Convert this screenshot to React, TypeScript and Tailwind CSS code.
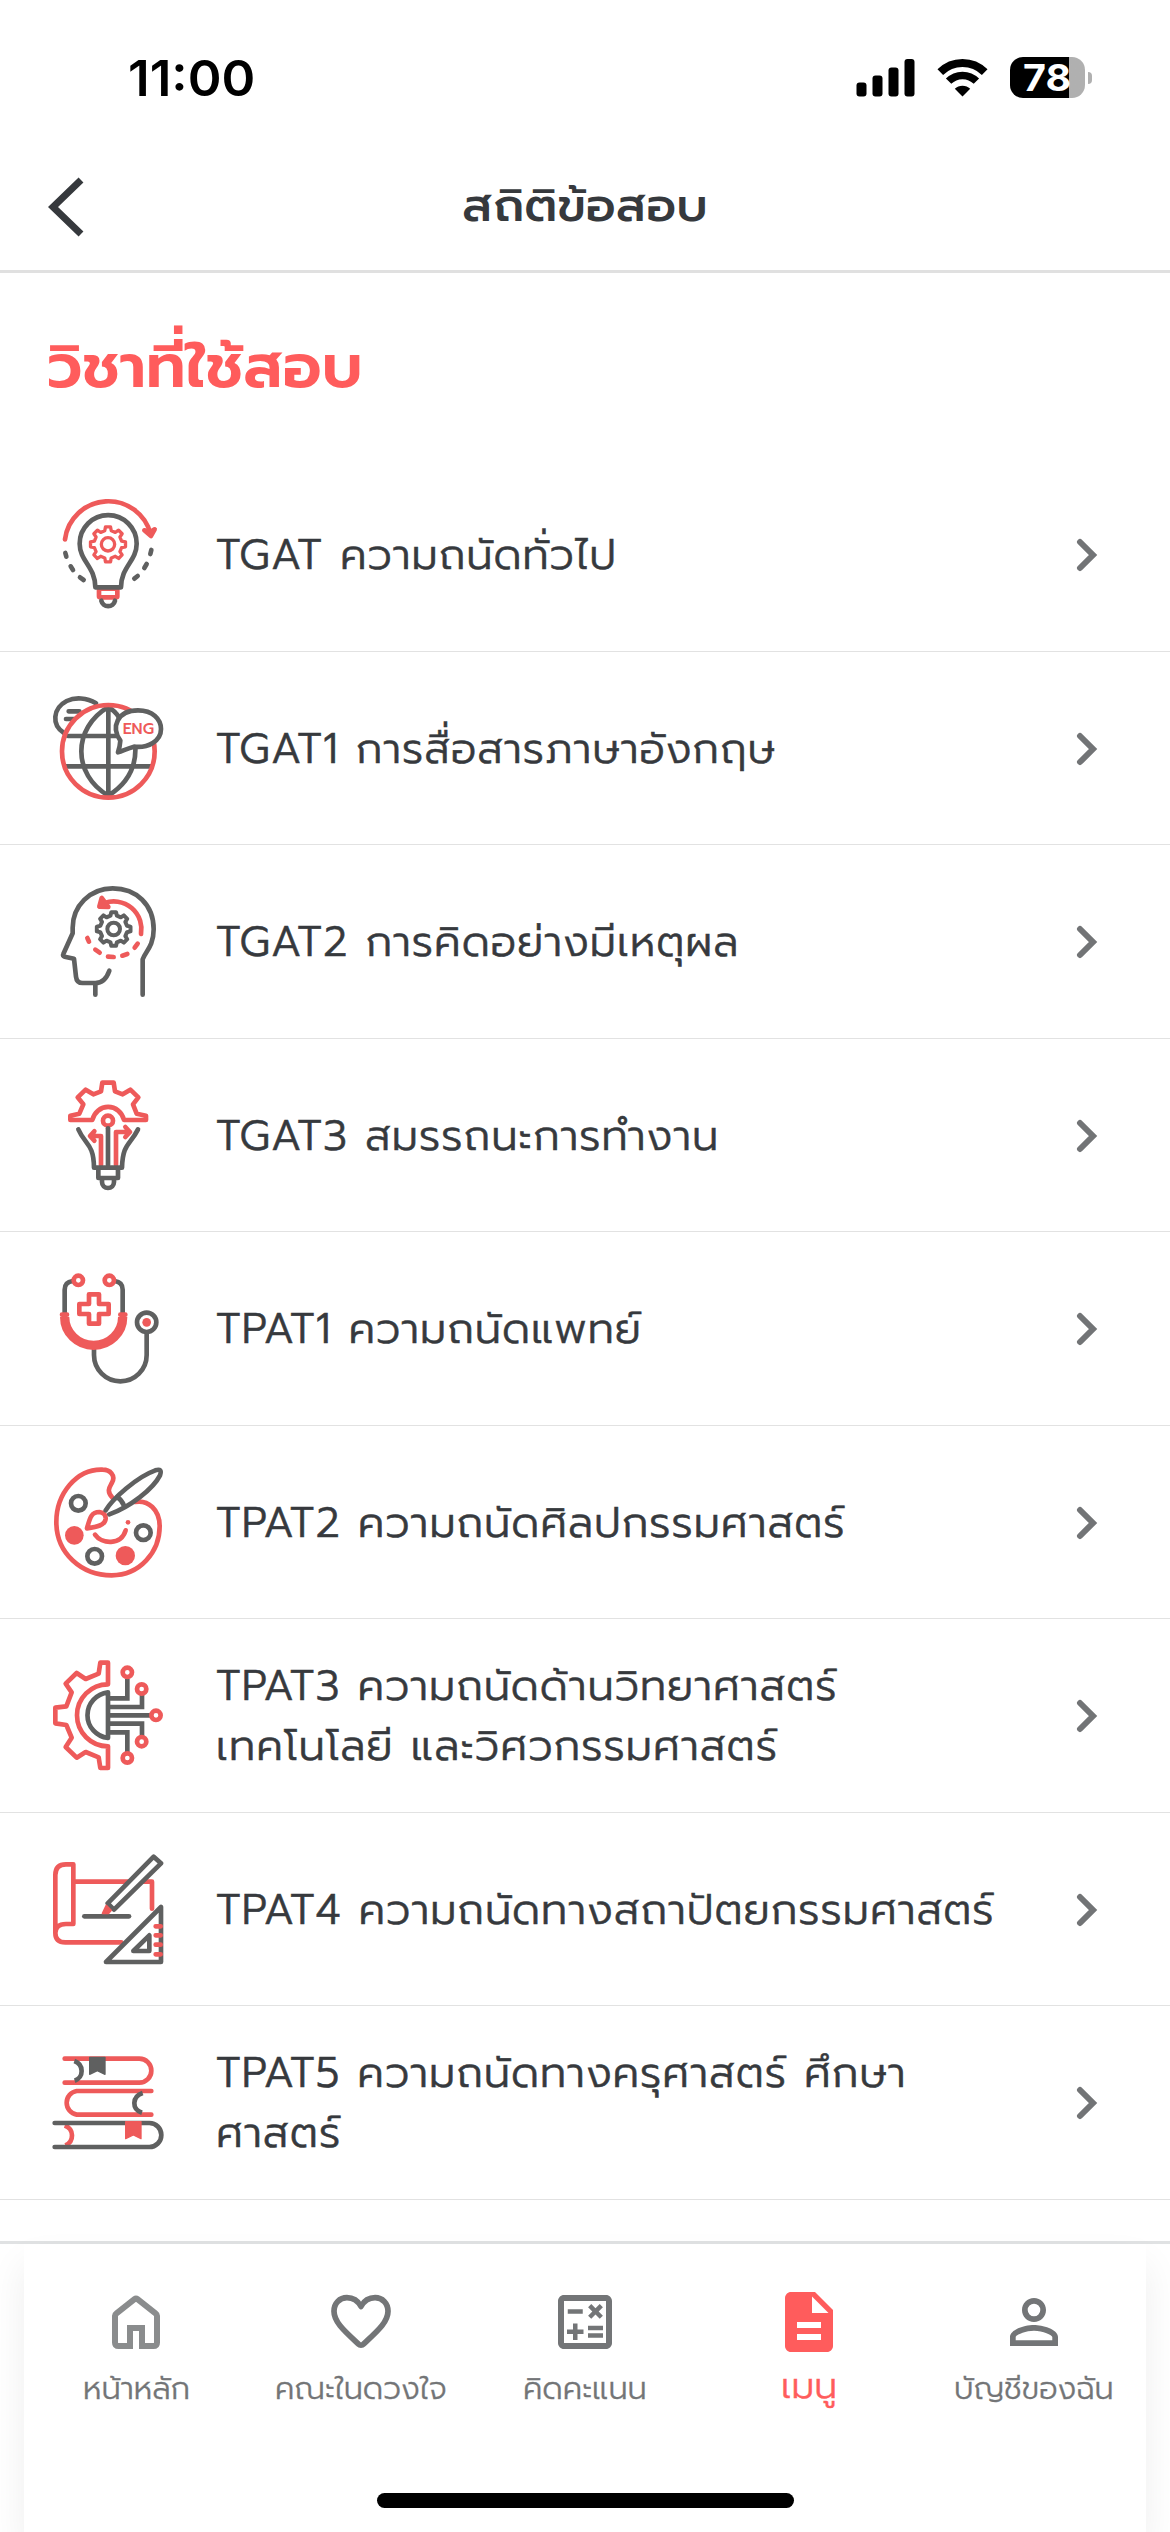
import React, { useLayoutEffect, useRef, useState } from "react";
import { MdOutlineCalculate, MdDescription, MdPersonOutline } from "react-icons/md";

const R = "#ee5a5a";
const D = "#5f6060";

/** Text stretched horizontally so that it fills exactly `w` pixels. */
function Fit({ w, children, className = "" }: { w: number; children: string; className?: string }) {
  const ref = useRef<HTMLSpanElement>(null);
  const [scale, setScale] = useState(1);
  useLayoutEffect(() => {
    if (ref.current) setScale(w / ref.current.offsetWidth);
  }, [w, children]);
  return (
    <span className={`block whitespace-nowrap ${className}`} style={{ width: w }}>
      <span ref={ref} className="inline-block origin-left" style={{ transform: `scaleX(${scale})` }}>
        {children}
      </span>
    </span>
  );
}

function gear(cx: number, cy: number, outer: number, inner: number, teeth = 8) {
  const pts: string[] = [];
  const step = (Math.PI * 2) / teeth;
  for (let i = 0; i < teeth; i++) {
    const a = -Math.PI / 2 + i * step;
    const add = (r: number, o: number) =>
      pts.push(`${(cx + r * Math.cos(a + o)).toFixed(1)},${(cy + r * Math.sin(a + o)).toFixed(1)}`);
    add(inner, -step * 0.3);
    add(outer, -step * 0.18);
    add(outer, step * 0.18);
    add(inner, step * 0.3);
  }
  return pts.join(" ");
}

function Icon({ y, children }: { y: number; children: React.ReactNode }) {
  return (
    <svg
      viewBox={`36 ${y} 336 336`}
      className="h-28 w-28 shrink-0"
      fill="none"
      strokeWidth="14"
      strokeLinecap="round"
      strokeLinejoin="round"
    >
      {children}
    </svg>
  );
}

const IdeaIcon = () => (
  <Icon y={56}>
    <g stroke={R}>
      <path d="M75 180A131 131 0 0 1 332 165" />
      <path d="M313 153L333 170L344 150L331 158Z" />
      <rect x="177" y="328" width="55" height="26" rx="3" />
      <polygon points={gear(204, 195, 53, 42)} strokeWidth="10" />
      <circle cx="204" cy="195" r="20" strokeWidth="10" />
    </g>
    <g stroke={D}>
      <path d="M166 324C166 262 119 245 119 193A85 85 0 0 1 290 193C290 245 243 262 243 324Z" />
      <path d="M184 364A21 21 0 0 0 225 364" />
      <path d="M76 221L79 232M92 261L99 272M120 294L131 302M334 212L331 224M320 254L313 266M293 290L283 298" />
    </g>
  </Icon>
);

const GlobeIcon = () => (
  <Icon y={637}>
    <g stroke={D}>
      <path d="M168 671C140 654 106 652 80 664C38 686 34 736 72 760" />
      <path d="M86 695H118M78 718H102" />
      <path d="M205 680V950M84 769H230M76 860H334M205 682C97 745 97 885 205 948C262 912 289 862 286 800M205 682C218 690 228 698 236 712" />
    </g>
    <circle cx="205" cy="815" r="139" stroke={R} />
    <path
      d="M241 783C212 742 232 692 294 692C338 692 363 718 363 748C363 784 324 806 282 801C262 806 248 814 234 818Q240 800 241 783Z"
      fill="#fff"
      stroke={D}
    />
    <text
      x="248"
      y="764"
      textLength="94"
      lengthAdjust="spacingAndGlyphs"
      fill={R}
      fontSize="45"
      className="font-['Prompt','Lato'] font-medium"
    >
      ENG
    </text>
  </Icon>
);

const HeadIcon = () => (
  <Icon y={47}>
    <g stroke={D}>
      <path d="M308 376V270C315 248 341 232 341 180C341 105 288 57 218 57C150 57 98 110 98 175V192L70 254Q67 260 74 262L102 268L108 322Q110 341 128 341H166Q195 341 208 304" />
      <path d="M166 343V376" />
      <polygon points={gear(221, 179, 51, 41)} strokeWidth="12" />
      <circle cx="221" cy="179" r="19" strokeWidth="12" />
    </g>
    <g stroke={R}>
      <path d="M303 194A83 83 0 0 0 194 101" />
      <path d="M185 86L178 112L205 113Z" fill={R} />
      <path d="M142 206L147 217M166 241L179 250M204 262L221 263M247 259L262 254M284 235L293 223" />
    </g>
  </Icon>
);

const SkillIcon = () => (
  <Icon y={627}>
    <g stroke={R}>
      <path d="M157 750H91V737L118 731L130 703L113 682L137 659L160 673L183 664L187 638H221L225 664L248 673L271 659L295 682L279 703L290 731L318 737V750H252A49 52 0 0 0 157 750Z" />
      <circle cx="204" cy="752" r="15" />
      <path d="M183 885V798H155M163 784L150 798L163 812M228 885V786H266M256 771L270 786L256 801" />
    </g>
    <g stroke={D}>
      <path d="M204 775V885" />
      <path d="M115 778C136 826 161 820 162 893H246C248 820 270 826 294 778" />
      <path d="M175 895V924H234V895M186 926V936A18 18 0 0 0 222 936V926" />
    </g>
  </Icon>
);

const MedicIcon = () => (
  <Icon y={67}>
    <g stroke={D}>
      <path d="M74 190V120Q74 97 98 94M248 190V120Q248 97 224 94" />
      <path d="M162 300V316A79 79 0 0 0 320 316V252" />
      <circle cx="320" cy="218" r="29" />
    </g>
    <g stroke={R}>
      <circle cx="115" cy="92" r="14" />
      <circle cx="208" cy="92" r="14" />
      <path d="M74 202A87 85 0 0 0 248 202" strokeWidth="28" strokeLinecap="butt" />
      <path d="M66 195H81M241 195H256" />
      <path d="M147 134H177V163H206V193H177V222H147V193H118V163H147Z" />
      <circle cx="320" cy="218" r="13" fill={R} stroke="none" />
    </g>
  </Icon>
);

const ArtIcon = () => (
  <Icon y={647}>
    <g stroke={R}>
      <path d="M218 743C198 722 209 710 216 697C228 675 210 658 188 658C110 655 49 730 49 815C49 910 125 975 215 975C300 975 359 905 359 828C359 778 325 748 285 755" />
      <path d="M165 853C185 882 243 886 257 840" />
      <path d="M141 834C150 800 155 785 178 785Q198 788 197 805C195 825 170 830 141 834Z" />
    </g>
    <g fill={R}>
      <circle cx="103" cy="855" r="28" />
      <circle cx="256" cy="916" r="29" />
      <circle cx="264" cy="816" r="7" />
    </g>
    <g stroke={D}>
      <circle cx="115" cy="759" r="22" />
      <circle cx="310" cy="847" r="22" />
      <circle cx="164" cy="918" r="22" />
      <path d="M197 780C218 745 290 680 346 660Q368 653 360 675C340 715 270 770 208 792" />
      <path d="M232 740Q246 750 252 766" />
    </g>
  </Icon>
);

const TechIcon = () => (
  <Icon y={59}>
    <g stroke={D}>
      <path d="M204 159A70 69 0 0 0 204 296Z" />
      <path
        d="M210 177H262V118M210 203H306V166M210 228H330M210 253H306V292M210 279H262V338"
        strokeLinejoin="miter"
        strokeLinecap="butt"
      />
    </g>
    <g stroke={R}>
      <path d="M204 70H181L176 103L137 119L110 101L77 133L95 159L79 201L46 205V252L79 257L95 295L77 323L110 355L137 338L176 354L181 386H204V321A93 93 0 0 1 204 135Z" />
      <circle cx="262" cy="99" r="14" />
      <circle cx="305" cy="149" r="14" />
      <circle cx="348" cy="228" r="14" />
      <circle cx="305" cy="307" r="14" />
      <circle cx="262" cy="356" r="14" />
    </g>
  </Icon>
);

const ArchitectIcon = () => (
  <Icon y={639}>
    <g stroke={R}>
      <path d="M100 673H78Q46 673 46 705V878Q46 907 76 907H244M100 673V852H78Q46 852 46 880M105 725H336V806" />
    </g>
    <path d="M133 829H267" stroke={D} />
    <path d="M341 650L363 670L222 809L203 790Z" stroke={D} fill="#fff" />
    <path d="M199 797L188 820H205L213 811Z" fill={R} stroke={R} strokeWidth="6" />
    <path d="M363 801V966H198Z" stroke={D} fill="#fff" />
    <path d="M328 886V933H280Z" stroke={D} />
    <path d="M347 859H362M347 886H362M347 914H362M347 943H362" stroke={R} />
  </Icon>
);

const BooksIcon = () => (
  <Icon y={48}>
    <g stroke={R}>
      <path d="M74 86H298A36 36 0 0 1 298 158H74M334 183H110A36 36 0 0 0 110 254H334" />
      <path d="M74 287C103 297 103 335 76 346" strokeLinecap="butt" />
    </g>
    <g stroke={D}>
      <path d="M103 93C132 103 132 143 104 152M308 189C275 200 275 238 306 248" strokeLinecap="butt" />
      <path d="M44 279H328A36 36 0 0 1 328 351H44" />
    </g>
    <path d="M149 82H195V133L172 122L149 133Z" fill={D} stroke={D} strokeWidth="4" />
    <path d="M257 275H303V326L280 315L257 326Z" fill={R} stroke={R} strokeWidth="4" />
  </Icon>
);

type Line = { text: string; w: number };
type Subject = { icon: () => React.ReactElement; lines: Line[] };

const subjects: Subject[] = [
  { icon: IdeaIcon, lines: [{ text: "TGAT ความถนัดทั่วไป", w: 401 }] },
  { icon: GlobeIcon, lines: [{ text: "TGAT1 การสื่อสารภาษาอังกฤษ", w: 560 }] },
  { icon: HeadIcon, lines: [{ text: "TGAT2 การคิดอย่างมีเหตุผล", w: 523 }] },
  { icon: SkillIcon, lines: [{ text: "TGAT3 สมรรถนะการทำงาน", w: 503 }] },
  { icon: MedicIcon, lines: [{ text: "TPAT1 ความถนัดแพทย์", w: 426 }] },
  { icon: ArtIcon, lines: [{ text: "TPAT2 ความถนัดศิลปกรรมศาสตร์", w: 629 }] },
  {
    icon: TechIcon,
    lines: [
      { text: "TPAT3 ความถนัดด้านวิทยาศาสตร์", w: 621 },
      { text: "เทคโนโลยี และวิศวกรรมศาสตร์", w: 562 },
    ],
  },
  { icon: ArchitectIcon, lines: [{ text: "TPAT4 ความถนัดทางสถาปัตยกรรมศาสตร์", w: 779 }] },
  {
    icon: BooksIcon,
    lines: [
      { text: "TPAT5 ความถนัดทางครุศาสตร์ ศึกษา", w: 691 },
      { text: "ศาสตร์", w: 125 },
    ],
  },
];

function SubjectRow({ s }: { s: Subject }) {
  const SubjectIcon = s.icon;
  return (
    <li className="flex h-[193.5px] items-center border-b border-[#e2e2e2] pl-[52px] pr-[72px]">
      <SubjectIcon />
      <div className="ml-[52px] flex-1 pt-[2px] text-[42px] font-light leading-[60px] tracking-[1px] text-[#36393d] [-webkit-text-stroke:0.6px_#36393d]">
        {s.lines.map((l) => (
          <Fit key={l.text} w={l.w}>{l.text}</Fit>
        ))}
      </div>
      <svg viewBox="0 0 22 34" className="mt-[2px] h-[34px] w-[22px]" fill="none" stroke="#727476" strokeWidth="6" strokeLinecap="round">
        <path d="M4 4L17 17L4 30" />
      </svg>
    </li>
  );
}

function StatusBar() {
  return (
    <div className="flex h-[155px] items-start justify-between pl-[128px] pr-[78px] text-black">
      <Fit w={127} className="mt-[48px] font-['Inter'] text-[50px] font-semibold leading-[60px]">11:00</Fit>
      <div className="mt-[57px] flex h-[41px] items-center">
        <svg viewBox="0 0 59 38" className="mr-[22px] h-[38px] w-[59px]">
          <rect x="0.500" y="23.500" width="10" height="14" rx="3" />
          <rect x="16.500" y="16.500" width="10" height="21" rx="3" />
          <rect x="32.500" y="8.500" width="10" height="29" rx="3" />
          <rect x="48.500" y="0" width="10" height="37.500" rx="3" />
        </svg>
        <svg viewBox="0 0 51 38" className="mr-[22px] h-[38px] w-[51px]" fill="none" stroke="#000">
          <path d="M3.300 13.200A31.500 31.500 0 0 1 47.700 13.200" strokeWidth="8" />
          <path d="M11.600 22.200A19.500 19.500 0 0 1 39.400 22.200" strokeWidth="7.500" />
          <path d="M25.500 37.500L17.800 29.800A11 11 0 0 1 33.200 29.800Z" fill="#000" stroke="none" />
        </svg>
        <div className="flex h-[41px] w-[75px] items-center rounded-[13px] bg-gradient-to-r from-black from-[79%] to-[#b0b0b0] to-[79%] pl-[13px]">
          <Fit w={48} className="font-['Inter'] text-[37px] font-bold leading-[41px] text-white">78</Fit>
        </div>
        <div className="ml-[3px] h-3 w-1 rounded-r-full bg-[#b0b0b0]" />
      </div>
    </div>
  );
}

const HomeIcon = () => (
  <svg viewBox="0 0 24 24" className="size-[72px]" fill="none" stroke="#8a8c8d" strokeWidth="2">
    <path d="M10 20H6.200Q5 20 5 18.800V9.900Q5 9.500 5.400 9.200L11.500 4.400Q12 4 12.500 4.400L18.600 9.200Q19 9.500 19 9.900V18.800Q19 20 17.800 20H14V14H10Z" />
  </svg>
);

const HeartIcon = () => (
  <svg viewBox="0 0 24 24" className="size-[72px]" fill="none" stroke="#737577" strokeWidth="1.900" strokeLinejoin="round">
    <path d="M12 19.700Q12.500 19.700 12.900 19.300C17.500 15 21 12 21 8.400C21 5.700 19.100 3.900 16.700 3.900C14.500 3.900 12.900 5.200 12 6.800C11.100 5.200 9.500 3.900 7.300 3.900C4.900 3.900 3 5.700 3 8.400C3 12 6.500 15 11.100 19.300Q11.500 19.700 12 19.700Z" />
  </svg>
);

const tabs = [
  { label: "หน้าหลัก", w: 107, icon: <HomeIcon /> },
  { label: "คณะในดวงใจ", w: 172, icon: <HeartIcon /> },
  { label: "คิดคะแนน", w: 124, icon: <MdOutlineCalculate size={72} /> },
  { label: "เมนู", w: 56, icon: <MdDescription size={72} />, active: true },
  { label: "บัญชีของฉัน", w: 160, icon: <MdPersonOutline size={72} /> },
];

export default function App() {
  return (
    <div className="flex h-[2532px] w-[1170px] flex-col overflow-hidden bg-white font-['Prompt','Noto_Sans_Thai','Noto_Sans',sans-serif]">
      <StatusBar />
      <header className="flex h-[118px] items-center justify-between border-b-[3px] border-[#e0e0e0] pl-12 pr-[84px]">
        <svg viewBox="0 0 36 60" className="mt-[-12px] h-[60px] w-9" fill="none" stroke="#36393d" strokeWidth="7">
          <path d="M33 3L5 30L33 57" />
        </svg>
        <h1 className="mt-[-14px] text-[46px] font-medium leading-[60px] text-[#36393d]"><Fit w={246}>สถิติข้อสอบ</Fit></h1>
        <span />
      </header>
      <main className="flex-1">
        <h2 className="flex h-[185px] items-center pl-[47px] pt-[3px] text-[60px] font-semibold leading-[72px] text-[#ff5c5c]"><Fit w={315}>วิชาที่ใช้สอบ</Fit></h2>
        <ul>
          {subjects.map((s) => (
            <SubjectRow key={s.lines[0].text} s={s} />
          ))}
        </ul>
      </main>
      <nav className="h-[291px] shrink-0 border-t-[3px] border-[#e0e2e3] px-6">
        <div className="flex h-full flex-col items-center shadow-[0_20px_36px_rgba(0,0,0,0.07)]">
          <div className="grid w-full grid-cols-5 pt-[42px]">
            {tabs.map((t) => (
              <div key={t.label} className={t.active ? "flex flex-col items-center text-[#ff5c5c]" : "flex flex-col items-center text-[#737577]"}>
                {t.icon}
                <Fit w={t.w} className={t.active ? "mt-[6px] text-[36px] font-light leading-[44px] [-webkit-text-stroke:0.4px_#ff5c5c]" : "mt-[9px] text-[30px] font-light leading-[44px] [-webkit-text-stroke:0.3px_#737577]"}>{t.label}</Fit>
              </div>
            ))}
          </div>
          <div className="mb-6 mt-auto h-[15px] w-[417px] rounded-full bg-black" />
        </div>
      </nav>
    </div>
  );
}
